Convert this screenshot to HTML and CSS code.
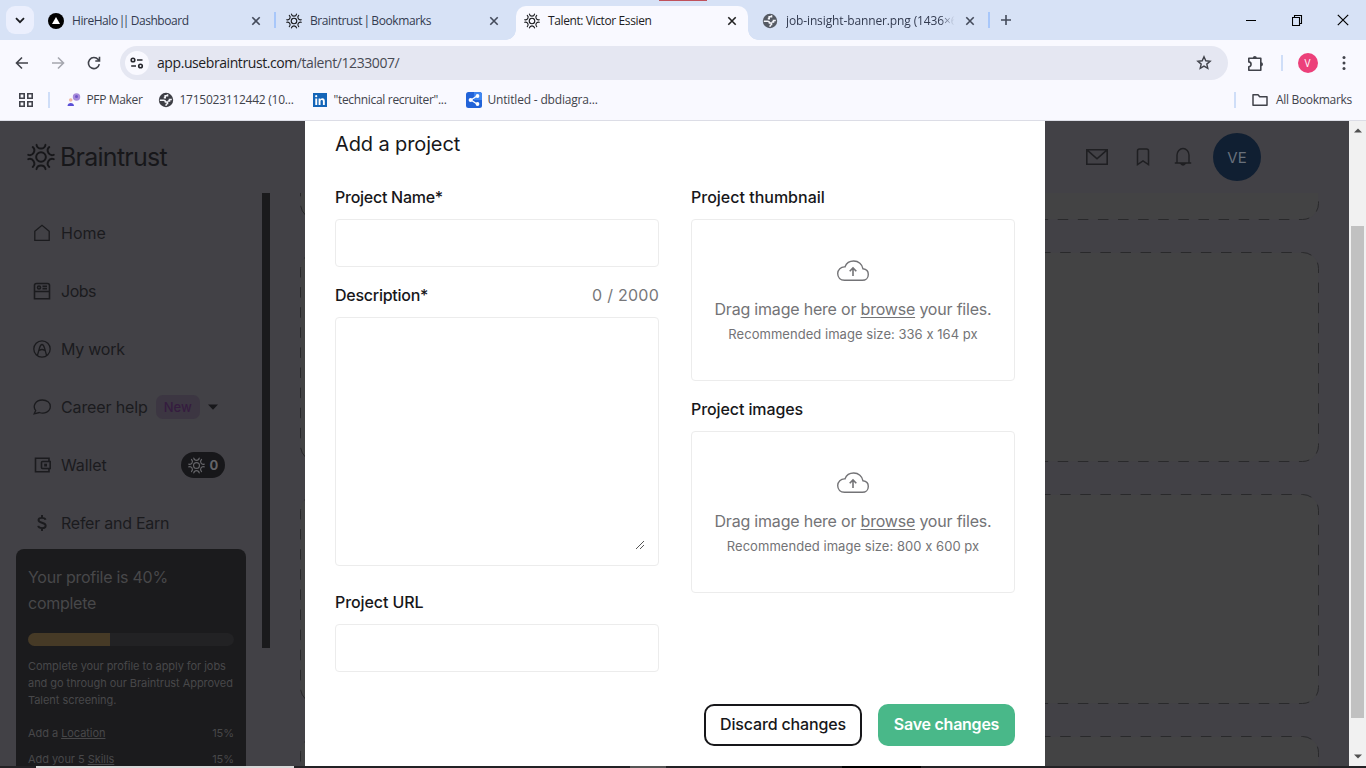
FILE: index.html
```html
<!DOCTYPE html>
<html lang="en">
<head>
<meta charset="utf-8">
<title>Talent: Victor Essien</title>
<link rel="stylesheet" href="styles.css">
</head>
<body>
<svg class="defs" width="0" height="0">
  <symbol id="gear" viewBox="-15 -15 30 30">
    <g fill="none" stroke="currentColor" stroke-width="2.1" stroke-linecap="round">
      <circle r="5.2"/>
      <path id="arc" d="M-4.8-13A4.9 4.9 0 0 0 4.8-13"/>
      <use href="#arc" transform="rotate(60)"/><use href="#arc" transform="rotate(120)"/><use href="#arc" transform="rotate(180)"/><use href="#arc" transform="rotate(240)"/><use href="#arc" transform="rotate(300)"/>
    </g>
  </symbol>
  <symbol id="close" viewBox="0 0 10 10"><path d="M1.3 1.3l7.4 7.4M8.7 1.3L1.3 8.7" fill="none" stroke="currentColor" stroke-width="1.6"/></symbol>
  <symbol id="globe" viewBox="0 0 16 16"><circle cx="8" cy="8" r="7.2" fill="currentColor"/><path d="M1.800 8.200H5.500Q7.500 8.300 7.500 10H9.500V11.500Q8 11.800 8 13.800M9.500 2.300V3.800H7.200V5.600H5.800M13.800 7.500H11.500V9H9.800" fill="none" stroke="#f4f5fa" stroke-width="1.600"/></symbol>
  <symbol id="cloud" viewBox="0 0 34 24">
    <path d="M8.500 21.300C4.500 21.300 1.700 18.500 1.700 14.600C1.700 10.700 4.900 7.600 8.900 7.900C10.300 4.400 13.800 2 17.700 2C22.500 2 26.300 5.300 27 9.800C30.200 10.200 32.300 12.500 32.300 15.400C32.300 18.900 29.700 21.300 26.300 21.300Z" fill="none" stroke="currentColor" stroke-width="1.4"/>
    <path d="M17 17V9.300M13.700 12.200L17 8.900L20.300 12.200" fill="none" stroke="currentColor" stroke-width="1.6"/>
  </symbol>
</svg>

<header class="tabstrip">
  <span class="tab-search"><svg width="10" height="7" viewBox="0 0 10 7"><path d="M1 1.200l4 4 4-4" fill="none" stroke="#1c1d22" stroke-width="1.800"/></svg></span>
  <div class="tab tab-first">
    <svg class="fav" viewBox="0 0 16 16"><circle cx="8" cy="8" r="8" fill="#000"/><path d="M8 4l4 7H4z" fill="#fff"/></svg>
    <span class="title t1">HireHalo <i class="pipes">||</i> Dashboard</span><svg class="x"><use href="#close"/></svg>
  </div>
  <i class="sep"></i>
  <div class="tab tab-second">
    <svg class="fav"><use href="#gear"/></svg>
    <span class="title t2">Braintrust <i class="pipes">|</i> Bookmarks</span><svg class="x"><use href="#close"/></svg>
  </div>
  <div class="tab active">
    <svg class="fav"><use href="#gear"/></svg>
    <span class="title t3">Talent: Victor Essien</span><svg class="x"><use href="#close"/></svg>
  </div>
  <div class="tab tab-last">
    <svg class="fav grey"><use href="#globe"/></svg>
    <span class="title t4 fade">job-insight-banner.png (1436×6</span><svg class="x"><use href="#close"/></svg>
  </div>
  <i class="sep"></i>
  <svg class="plus" viewBox="0 0 10 10"><path d="M5 0v10M0 5h10" stroke="#444b5b" stroke-width="1.600"/></svg>
  <div class="win">
    <svg width="10" height="12" viewBox="0 0 10 12"><path d="M0 6.500h10" stroke="#000"/></svg>
    <svg width="11" height="11" viewBox="0 0 11 11"><path d="M.5 2.500h7v8h-7zM2.500 2.500v-2h7v8h-2" fill="none" stroke="#000" stroke-width="1.100"/></svg>
    <svg width="12" height="12" viewBox="0 0 12 12"><path d="M.8.8l10.400 10.400M11.200.8L.8 11.200" stroke="#000" stroke-width="1.200"/></svg>
  </div>
</header>

<div class="toolbar">
  <svg class="nav" viewBox="0 0 16 16"><path d="M14 8H3M8 2.500L2.500 8 8 13.500" fill="none" stroke="#41434b" stroke-width="1.600"/></svg>
  <svg class="nav" viewBox="0 0 16 16"><path d="M2 8h11M8 2.500L13.500 8 8 13.500" fill="none" stroke="#a5a7af" stroke-width="1.600"/></svg>
  <svg class="nav" viewBox="0 0 16 16"><path d="M13.300 9.200A5.500 5.500 0 1 1 12.200 4.600L13 5.600M13.500 1.800V6H9.300" fill="none" stroke="#41434b" stroke-width="1.600"/></svg>
  <div class="omnibox">
    <span class="site"><svg width="14" height="12" viewBox="0 0 14 12" fill="none" stroke="#25262c" stroke-width="1.600"><circle cx="3" cy="3" r="1.800"/><path d="M7 3h5.500M1.200 9H6"/><circle cx="10.500" cy="9" r="1.800"/></svg></span>
    <span class="url"><b>app.usebraintrust.com</b>/talent/1233007/</span>
    <svg class="star" viewBox="0 0 16 16"><path d="M8 1.800l1.800 4 4.300.4-3.300 2.900 1 4.300L8 11.100l-3.800 2.300 1-4.300L1.900 6.200l4.300-.4z" fill="none" stroke="#41434b" stroke-width="1.400"/></svg>
  </div>
  <svg class="puzzle" viewBox="0 0 17 17"><path d="M1.800 3.300h12v11.900h-12v-3.500c3-.2 3-4.600 0-4.800z" fill="none" stroke="#41434b" stroke-width="1.600" stroke-linejoin="round"/><path d="M5.800 3a2 2 0 0 1 4 0zM14 7.300a2 2 0 0 1 0 4z" fill="#41434b"/></svg>
  <i class="bar"></i>
  <span class="profile">V</span>
  <svg class="dots" viewBox="0 0 4 16" fill="#41434b"><circle cx="2" cy="2.500" r="1.500"/><circle cx="2" cy="8" r="1.500"/><circle cx="2" cy="13.500" r="1.500"/></svg>
</div>

<div class="bookmarks">
  <svg class="apps" viewBox="0 0 14 14" fill="none" stroke="#41434b" stroke-width="1.600"><path d="M.8.8h4.400v4.400H.8zM8.800.8h4.400v4.400H8.800zM.8 8.800h4.400v4.400H.8zM8.800 8.800h4.400v4.400H8.800z"/></svg>
  <i class="bar"></i>
  <div class="bm bm1"><svg viewBox="0 0 14 14"><circle cx="9.500" cy="4" r="3.700" fill="#a78bda"/><circle cx="9.500" cy="3.500" r="1.500" fill="#6f54c9"/><circle cx="3.700" cy="7" r="1.800" fill="#f1b7a5"/><path d="M.5 13c0-4 6.500-4 6.500 0z" fill="#5a4fd6"/></svg><span>PFP Maker</span></div>
  <div class="bm bm2"><svg viewBox="0 0 16 16" class="dark"><use href="#globe"/></svg><span>1715023112442 (10...</span></div>
  <div class="bm bm3"><svg viewBox="0 0 14 14"><path d="M0 0h14v14H0z" fill="#1465b8"/><path d="M2.300 5.400h1.900V12H2.300zM5.600 5.400h1.800v1c1.100-1.700 4.400-1.500 4.400 1.500V12H9.900V8.400c0-1.900-2.400-1.700-2.400 0V12H5.600z" fill="#fff"/><circle cx="3.200" cy="3.200" r="1.100" fill="#fff"/></svg><span>"technical recruiter"...</span></div>
  <div class="bm bm4"><svg viewBox="0 0 16 16"><rect width="16" height="16" rx="2.500" fill="#2263d8"/><path d="M8 0h5.500Q16 0 16 2.500V8H8z" fill="#3f86f0"/><path d="M11 4L5 8l6 4" fill="none" stroke="#fff" stroke-width="1.300"/><circle cx="4.600" cy="8" r="2" fill="#fff"/><circle cx="11.500" cy="4" r="1.900" fill="#fff"/><circle cx="11.500" cy="12" r="1.900" fill="#fff"/></svg><span>Untitled - dbdiagra...</span></div>
  <div class="all"><i class="bar"></i><svg viewBox="0 0 16 14"><path d="M1 12.200V1.800h5l1.700 2H15v8.400z" fill="none" stroke="#41434b" stroke-width="1.500" stroke-linejoin="round"/></svg><span>All Bookmarks</span></div>
</div>

<div class="viewport">
  <div class="page">
    <div class="site-head">
      <svg class="logo"><use href="#gear"/></svg><span class="brand">Braintrust</span>
      <div class="actions">
        <svg width="22" height="16" viewBox="0 0 22 16" fill="none" stroke="#1f1f22" stroke-width="1.600"><path d="M.8.8h20.400v14.400H.8zM1.500 1.300L11 9.800l9.500-8.500"/></svg>
        <svg width="14" height="18" viewBox="0 0 14 18" fill="none" stroke="#1f1f22" stroke-width="1.500"><path d="M1.500 16.500V3q0-2 2-2h7q2 0 2 2v13.500L7 12.800z"/></svg>
        <svg width="18" height="20" viewBox="0 0 18 20" fill="none" stroke="#1f1f22" stroke-width="1.400"><path d="M.8 16h16.400M3 15.800V8a6 6.500 0 0 1 12 0v7.800"/><path d="M6.800 16.600q2.200 3 4.400 0z" fill="#1f1f22"/></svg>
        <span class="avatar">VE</span>
      </div>
    </div>
    <div class="columns">
      <nav class="side">
        <a><svg viewBox="0 0 18 18"><path d="M1.800 7.300L9 1.300l7.200 6V16.300H1.800z"/></svg><span class="n1">Home</span></a>
        <a><svg viewBox="0 0 18 18" class="mid"><path d="M1.500 16.800V3.500q0-2 2-2h11q2 0 2 2v13.300zM1.500 9.500h15M9.500 4.300H14M9.500 6.600H14"/><circle cx="6" cy="5.500" r="1.500"/></svg><span class="n2">Jobs</span></a>
        <a><svg viewBox="0 0 18 18"><circle cx="9" cy="9" r="8.200"/><path d="M4.500 15.200L6.500 8q1-3.500 2.500-3.500t2.500 3.500l2 7.200M6.300 10.500Q9 8.500 11.700 10.500"/></svg><span class="n3">My work</span></a>
        <a><svg viewBox="0 0 18 18"><path d="M1.200 15.800l1.500-3.200C-.8 8 2.500 2 9.300 2c4.700 0 8 2.800 8 6.500 0 5-5.800 7.900-11 6z"/></svg><span class="n4">Career help</span><em>New</em><svg class="caret" viewBox="0 0 10 6"><path d="M0 .5h10L5 5.800z"/></svg></a>
        <a><svg viewBox="0 0 18 18" class="mid"><path d="M16 5V2.200H2.500v13.600H16V13"/><path d="M9.500 5.500h7.700v7H9.500q-1 0-1-1v-5q0-1 1-1z"/><path d="M12 8.500h1.200v1.200H12z"/></svg><span class="n5">Wallet</span><strong><svg class="coin"><use href="#gear"/></svg>0</strong></a>
        <a><svg viewBox="0 0 18 18" class="thick"><path d="M12.500 5.800C12 3.200 5.500 3.200 5.500 6c0 3.500 7.200 2 7.200 5.700 0 3.300-7 3.200-7.500.2M9 1v2.800M9 14v3"/></svg><span class="n6">Refer and Earn</span></a>
        <section class="progress-card">
          <h3>Your profile is 40%<br>complete</h3>
          <div class="meter"><i></i></div>
          <p>Complete your profile to apply for jobs<br>and go through our Braintrust Approved<br>Talent screening.</p>
          <div class="todo"><span>Add a <u>Location</u></span><span>15%</span></div>
          <div class="todo"><span>Add your 5 <u>Skills</u></span><span>15%</span></div>
        </section>
      </nav>
      <div class="track"></div>
      <main class="cards">
        <svg class="card first"><rect x=".5" y="-182.500" width="1018" height="209" rx="16"/></svg>
        <svg class="card"><rect x=".5" y=".5" width="1018" height="209" rx="16"/></svg>
        <svg class="card"><rect x=".5" y=".5" width="1018" height="209" rx="16"/></svg>
        <svg class="card"><rect x=".5" y=".5" width="1018" height="209" rx="16"/></svg>
      </main>
    </div>
  </div>
  <div class="scrollbar">
    <svg viewBox="0 0 8 5"><path d="M0 4.500L4 .5l4 4z" fill="#505050"/></svg>
    <i></i>
    <svg viewBox="0 0 8 5"><path d="M0 .5l4 4 4-4z" fill="#505050"/></svg>
  </div>

  <div class="modal">
    <h2>Add a project</h2>
    <div class="form">
      <div class="col">
        <label><span class="tight">Project Name*</span></label>
        <div class="box input"></div>
        <label class="second"><span class="tight">Description*</span><span class="count">0 / 2000</span></label>
        <div class="box area"><svg width="10" height="10" viewBox="0 0 10 10"><path d="M1 9l8-8M5 9l4-4" stroke="#444" stroke-width=".9"/></svg></div>
        <label class="third"><span class="snug">Project URL</span></label>
        <div class="box input"></div>
      </div>
      <div class="col">
        <label><span>Project thumbnail</span></label>
        <div class="box drop"><svg><use href="#cloud"/></svg><p class="drag">Drag image here or <u>browse</u> your files.</p><p class="hint">Recommended image size: 336 x 164 px</p></div>
        <label class="images"><span class="snug">Project images</span></label>
        <div class="box drop"><svg><use href="#cloud"/></svg><p class="drag">Drag image here or <u>browse</u> your files.</p><p class="hint">Recommended image size: 800 x 600 px</p></div>
      </div>
    </div>
    <div class="buttons"><button class="discard">Discard changes</button><button class="save">Save changes</button></div>
  </div>
</div>
<footer class="strip"><i class="s1"></i><i class="s2"></i><i class="s3"></i></footer>
</body>
</html>
```
FILE: styles.css
```css
* { box-sizing: border-box; }
body { margin: 0; width: 1366px; height: 768px; overflow: hidden; display: flex; flex-direction: column; font-family: Inter, "Liberation Sans", sans-serif; font-feature-settings: "calt" 0; background: #f9f9ff; }
svg { display: block; flex: none; }
.defs { position: absolute; }
h2, h3, p { margin: 0; font-weight: 400; }

/* browser chrome */
.tabstrip, .toolbar, .bookmarks { font-family: "Open Sans", "Noto Sans", sans-serif; font-size: 12px; white-space: nowrap; display: flex; align-items: center; flex: none; }
.tabstrip { height: 40px; background: linear-gradient(#c0515b, #c0515b) 659px 0 / 48px 1px no-repeat, #d7e2f6; padding-left: 6px; color: #333b50; }
.tab-search { width: 28px; height: 28px; border-radius: 9px; background: #ebeffd; display: grid; place-items: center; }
.tab { height: 34px; margin-top: 6px; padding-bottom: 5px; display: flex; align-items: center; }
.fav { width: 16px; height: 16px; color: #17181c; }
.fav.grey { color: #555a63; }
.title { margin-left: 8px; flex: 1; }
.x { width: 10px; height: 10px; color: #444b5b; }
.tab-first { width: 240px; padding: 0 13px 5px 14px; }
.tab-second { width: 240px; padding: 0 17px 5px 10px; }
.active { width: 232px; background: #f9f9ff; border-radius: 10px 10px 0 0; padding: 0 11px 5px 8px; color: #1d1d24; position: relative; }
.active .x { color: #222; }
.active::before, .active::after { content: ""; position: absolute; bottom: 0; width: 10px; height: 10px; }
.active::before { left: -10px; background: radial-gradient(circle at 0 0, transparent 9.5px, #f9f9ff 10px); }
.active::after { right: -10px; background: radial-gradient(circle at 100% 0, transparent 9.5px, #f9f9ff 10px); }
.tab-last { width: 240px; padding: 0 13px 5px 14px; }
.fade { flex: none; width: 172px; margin-right: 7px; letter-spacing: -.12px; -webkit-mask: linear-gradient(90deg, #000 90%, transparent 98%); mask: linear-gradient(90deg, #000 90%, transparent 98%); }
.sep { width: 2px; height: 16px; background: #a8c7fa; }
.plus { width: 10px; height: 10px; margin-left: 11px; }
.t1 { letter-spacing: -.45px; }
.t2 { letter-spacing: -.4px; }
.t3 { letter-spacing: -.39px; }
.pipes { font-style: normal; letter-spacing: -2.6px; margin: 0 1.200px 0 -1.500px; }
.win { margin-left: auto; display: flex; gap: 35px; align-items: center; padding-right: 17px; }
.win svg:nth-child(2) { margin: 0 -1px 0 1px; }

.toolbar { height: 46px; padding: 0 14px; }
.nav { width: 16px; height: 16px; margin-right: 20px; }
.omnibox { width: 1108px; height: 34px; margin-left: -2px; background: #e5e7f2; border-radius: 17px; display: flex; align-items: center; padding: 0 16px 0 5px; font-size: 14px; color: #484a54; }
.site { width: 24px; height: 24px; border-radius: 50%; background: #f9f9ff; display: grid; place-items: center; }
.url { margin-left: 8px; flex: 1; letter-spacing: -.42px; padding-bottom: 1px; }
.url b { font-weight: 400; color: #1d1d24; }
.star { width: 16px; height: 16px; }
.puzzle { width: 17px; height: 17px; margin-left: 19px; }
.bar { width: 1.500px; height: 16px; background: #cfdef8; }
.toolbar .bar { margin-left: 17px; }
.profile { width: 20px; height: 20px; border-radius: 50%; background: #ec407a; color: #fff; font-size: 10px; margin-left: 15px; display: grid; place-items: center; }
.dots { width: 4px; height: 16px; margin-left: 24px; }

.bookmarks { height: 35px; padding: 0 14px 7px 19px; border-bottom: 1px solid #dcdde6; color: #41434b; }
.apps { width: 14px; height: 14px; }
.bookmarks > .bar { margin-left: 15px; }
.bm { display: flex; align-items: center; gap: 6px; height: 20px; }
.bm svg { width: 14px; height: 14px; }
.bm1 { margin-left: 17px; width: 91px; letter-spacing: -.35px; }
.bm2 { width: 155px; letter-spacing: -.25px; }
.bm2 svg, .bm4 svg { width: 16px; height: 16px; }
.dark { color: #3d3e45; }
.bm3 { width: 153px; gap: 7px; letter-spacing: -.32px; }
.bm4 { letter-spacing: -.18px; }
.all { margin-left: auto; display: flex; align-items: center; letter-spacing: -.3px; }
.all svg { width: 16px; height: 14px; margin: 0 8px 0 16px; }

/* page under the dialog */
.viewport { flex: 1; min-height: 0; display: flex; position: relative; overflow: hidden; background: #424146; }
.page { width: 1349px; height: 645px; overflow: hidden; }
.site-head { height: 72px; display: flex; align-items: center; padding: 0 88px 0 27px; color: #17171a; }
.logo { width: 28px; height: 28px; }
.brand { font-size: 25px; margin-left: 5px; letter-spacing: -.75px; }
.actions { margin-left: auto; display: flex; align-items: center; }
.actions svg:nth-child(2) { margin-left: 28px; }
.actions svg:nth-child(3) { margin-left: 24px; }
.avatar { width: 48px; height: 48px; margin-left: 21px; border-radius: 50%; background: #101f32; color: #68707b; display: grid; place-items: center; font-size: 15px; }
.columns { display: flex; height: 573px; }
.side { width: 262px; padding-top: 11px; color: #1b1b1e; font-size: 16px; }
.side a { height: 58px; display: flex; align-items: center; padding-left: 33px; white-space: nowrap; }
.side a > svg { width: 18px; height: 18px; margin-right: 10px; fill: none; stroke: #1b1b1e; stroke-width: 1.300; }
.side a > .mid { stroke-width: 1.600; }
.side a > .thick { stroke-width: 1.900; }
.side a > .caret { width: 10px; height: 6px; margin: 0 0 0 8px; fill: #17171a; stroke: none; }
.n2 { letter-spacing: -.5px; }
.n3 { letter-spacing: -.25px; }
.n4, .n5 { letter-spacing: -.12px; }
.n6 { letter-spacing: -.25px; }
.side em { font-style: normal; font-size: 13px; font-weight: 500; height: 24px; width: 44px; border-radius: 7px; background: #3c3642; color: #351c3f; display: grid; place-items: center; margin-left: 8px; }
.side strong { margin: 0 37px 0 auto; width: 44px; height: 26px; border-radius: 13px; background: #17171a; color: #646468; font-size: 13px; display: flex; align-items: center; justify-content: center; gap: 5px; }
.coin { width: 17px; height: 17px; }
.progress-card { width: 230px; height: 230px; margin: -3px 0 0 16px; border-radius: 8px; background: #1b1b1d; color: #48484a; padding: 15px 12px; white-space: nowrap; font-size: 11px; letter-spacing: -.05px; }
.progress-card h3 { font-size: 16px; line-height: 26px; letter-spacing: -.26px; }
.meter { height: 13px; border-radius: 7px; background: #222224; margin-top: 17px; overflow: hidden; }
.meter i { display: block; height: 13px; width: 40%; background: #463a26; }
.progress-card p { line-height: 17px; margin: 12px 0 15px; }
.todo { display: flex; justify-content: space-between; line-height: 18px; margin-bottom: 8px; }
.track { width: 8px; height: 455px; background: #1a1a1c; }
.cards { margin-left: 30px; width: 1019px; display: flex; flex-direction: column; gap: 32px; overflow: hidden; }
.card { width: 1019px; height: 210px; }
.card.first { height: 27px; }
.card rect { fill: #434344; stroke: #29292b; stroke-width: 1; stroke-dasharray: 10.500 9.600; }

.scrollbar { width: 17px; background: #f1f1f1; display: flex; flex-direction: column; align-items: center; padding: 7px 0; }
.scrollbar svg { width: 8px; height: 5px; }
.scrollbar i { width: 13px; height: 492px; margin: 93px 0 auto; background: #c1c1c1; }

/* dialog */
.modal { position: absolute; left: 305px; top: 0; width: 740px; height: 645px; background: #fff; padding: 8px 30px 0; color: #17171a; }
.modal h2 { font-size: 20px; line-height: 30px; font-weight: 400; letter-spacing: -.12px; }
.form { display: grid; grid-template-columns: 324px 324px; gap: 32px; margin-top: 26px; }
.modal label { display: flex; justify-content: space-between; height: 24px; line-height: 24px; font-size: 16px; font-weight: 500; margin-bottom: 10px; }
.tight { letter-spacing: -.26px; }
.snug { letter-spacing: -.1px; }
.box { border: 1px solid #ececec; border-radius: 4px; }
.input { height: 48px; }
.modal .second { margin-top: 16px; }
.area { height: 249px; display: flex; align-items: flex-end; justify-content: flex-end; padding: 0 13px 15px 0; }
.modal .third { margin-top: 24px; }
.count { font-weight: 400; color: #77777a; letter-spacing: .25px; }
.drop { height: 162px; display: flex; flex-direction: column; align-items: center; padding-top: 39px; color: #737376; white-space: nowrap; }
.drop svg { width: 34px; height: 24px; }
.drag { font-size: 16px; line-height: 24px; margin-top: 14px; letter-spacing: -.2px; }
.drop u { text-underline-offset: 2px; }
.hint { font-size: 13px; line-height: 20px; margin-top: 3px; letter-spacing: .04px; }
.modal .images { margin-top: 16px; }
.buttons { display: flex; justify-content: flex-end; gap: 16px; margin-top: 32px; }
.buttons button { height: 42px; border-radius: 10px; font: 500 16px Inter, "Liberation Sans", sans-serif; padding: 0 0 2px; white-space: nowrap; }
.discard { width: 158px; border: 2px solid #17171a; background: #fff; color: #17171a; letter-spacing: -.15px; }
.save { width: 137px; border: 0; background: #49b889; color: #fff; letter-spacing: -.25px; }
.buttons .save { font-weight: 600; }

.strip { height: 2px; flex: none; background: #232225; display: flex; }
.s1 { width: 258px; margin-left: 36px; background: #d8d8d8; }
.s2 { width: 36px; margin-left: 336px; background: #555; }
.s3 { width: 79px; margin-left: 176px; background: #000; }
```
